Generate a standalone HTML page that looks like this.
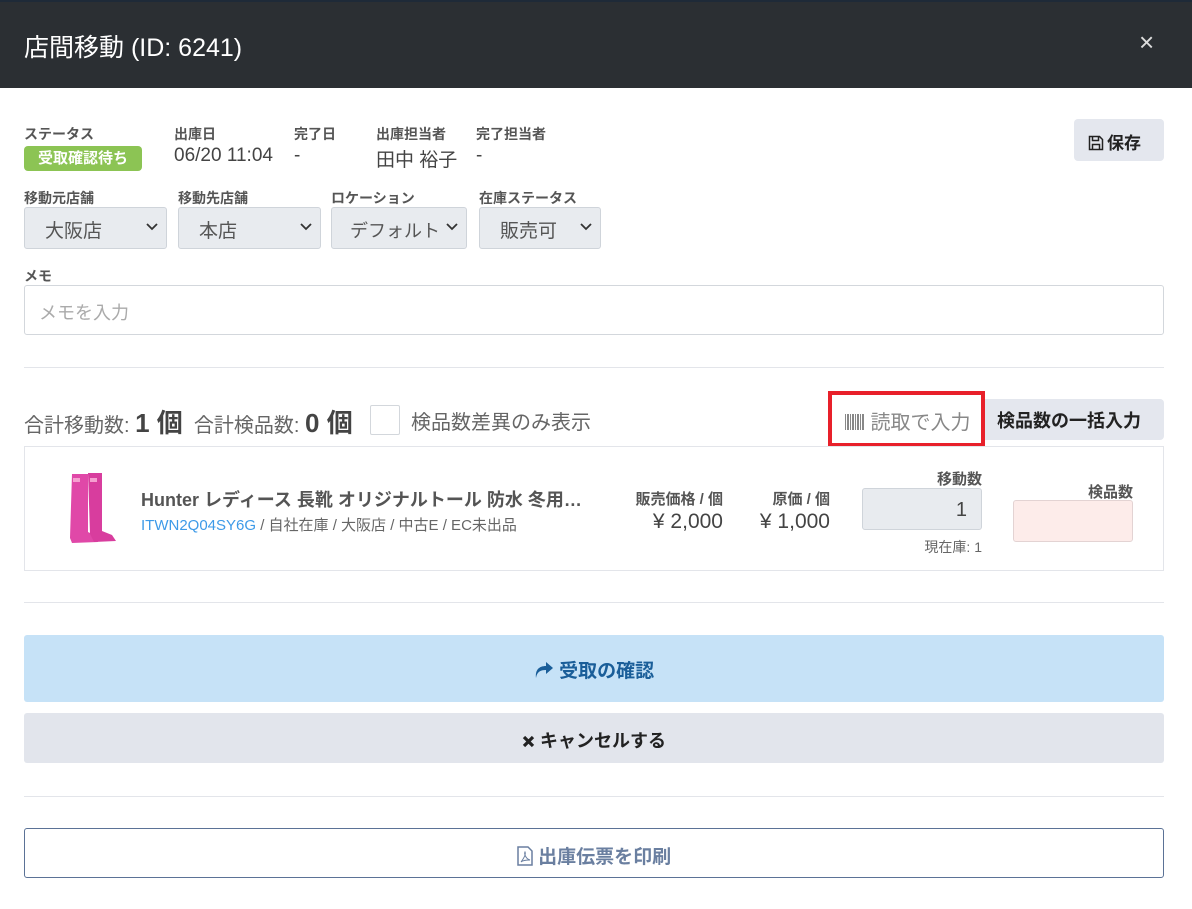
<!DOCTYPE html>
<html><head><meta charset="utf-8"><style>
*{box-sizing:border-box;margin:0;padding:0}
body{width:1192px;height:909px;background:#fff;font-family:"Liberation Sans","Noto Sans CJK JP",sans-serif;color:#444;position:relative;overflow:hidden}
.a{position:absolute}
.hdr{left:0;top:0;width:1192px;height:88px;background:#2b2f33;border-top:2px solid #1e2a38}
.lbl{font-size:14px;font-weight:bold;color:#555;top:124px}
.val{font-size:19px;color:#444;top:145px}
.sel{top:207px;height:42px;background:#e8ebef;border:1px solid #cfd4da;border-radius:3px;font-size:19px;color:#555;padding:8px 0 0 20px}
.sel svg{position:absolute;right:8px;top:15px}
.hr{left:24px;width:1140px;height:1px;background:#e3e5ea}
.btn{left:24px;width:1140px;text-align:center;border-radius:3px;font-weight:bold;font-size:19px}
</style></head><body>
<div class="a hdr"></div>
<div class="a" style="left:24px;top:28px;font-size:25px;color:#fff">店間移動 (ID: 6241)</div>
<div class="a" style="left:1139px;top:27px;font-size:26px;color:#ddd">×</div>

<div class="a lbl" style="left:24px">ステータス</div>
<div class="a" style="left:24px;top:146px;width:118px;height:25px;background:#8cc454;border-radius:4px;color:#fff;font-weight:bold;font-size:15px;text-align:center;line-height:25px">受取確認待ち</div>
<div class="a lbl" style="left:174px">出庫日</div>
<div class="a val" style="left:174px">06/20 11:04</div>
<div class="a lbl" style="left:294px">完了日</div>
<div class="a val" style="left:294px">-</div>
<div class="a lbl" style="left:376px">出庫担当者</div>
<div class="a val" style="left:376px">田中 裕子</div>
<div class="a lbl" style="left:476px">完了担当者</div>
<div class="a val" style="left:476px">-</div>
<div class="a" style="left:1074px;top:119px;width:90px;height:42px;background:#e4e7ee;border-radius:4px;font-size:17px;font-weight:bold;color:#222;padding:10px 0 0 14px">
<svg width="16" height="16" viewBox="0 0 16 16" style="vertical-align:-2px;margin-right:3px"><path d="M1.5 1.5h10l3 3v10h-13z" fill="none" stroke="#222" stroke-width="1.5"/><path d="M4.5 1.5v4h6v-4M4.5 14.5v-5h7v5" fill="none" stroke="#222" stroke-width="1.5"/></svg>保存</div>

<div class="a lbl" style="left:24px;top:188px">移動元店舗</div>
<div class="a lbl" style="left:178px;top:188px">移動先店舗</div>
<div class="a lbl" style="left:331px;top:188px">ロケーション</div>
<div class="a lbl" style="left:479px;top:188px">在庫ステータス</div>
<div class="a sel" style="left:24px;width:143px">大阪店<svg width="12" height="8"><path d="M1 1l5 5 5-5" fill="none" stroke="#333" stroke-width="1.8"/></svg></div>
<div class="a sel" style="left:178px;width:143px">本店<svg width="12" height="8"><path d="M1 1l5 5 5-5" fill="none" stroke="#333" stroke-width="1.8"/></svg></div>
<div class="a sel" style="left:331px;width:136px;padding-left:18px;font-size:18px;padding-top:9px">デフォルト<svg width="12" height="8"><path d="M1 1l5 5 5-5" fill="none" stroke="#333" stroke-width="1.8"/></svg></div>
<div class="a sel" style="left:479px;width:122px">販売可<svg width="12" height="8"><path d="M1 1l5 5 5-5" fill="none" stroke="#333" stroke-width="1.8"/></svg></div>

<div class="a lbl" style="left:24px;top:266px">メモ</div>
<div class="a" style="left:24px;top:285px;width:1140px;height:50px;border:1px solid #d3d7dc;border-radius:3px;font-size:18px;color:#aaa;padding:13px 14px">メモを入力</div>
<div class="a hr" style="top:367px"></div>

<div class="a" style="left:24px;top:403px;font-size:20px;color:#666;white-space:nowrap">合計移動数: <b style="font-size:26px;color:#444">1 個</b>&nbsp; 合計検品数: <b style="font-size:26px;color:#444">0 個</b></div>
<div class="a" style="left:370px;top:405px;width:30px;height:30px;border:1px solid #d3d7dc;border-radius:2px"></div>
<div class="a" style="left:411px;top:406px;font-size:20px;color:#666">検品数差異のみ表示</div>
<div class="a" style="left:828px;top:391px;width:157px;height:56px;border:4px solid #e8202a"></div>
<div class="a" style="left:845px;top:406px;font-size:20px;color:#888"><span style="display:inline-block;width:20px;height:16px;background:repeating-linear-gradient(90deg,#888 0 1px,#fff 1px 2px,#888 2px 4px,#fff 4px 5px);vertical-align:-1px"></span> 読取で入力</div>
<div class="a" style="left:985px;top:399px;width:179px;height:41px;background:#e4e7ee;border-radius:0 4px 4px 0;font-size:18px;font-weight:bold;color:#222;padding:8px 0 0 12px">検品数の一括入力</div>

<div class="a" style="left:24px;top:446px;width:1140px;height:125px;border:1px solid #e3e5ea"></div>
<svg class="a" style="left:64px;top:470px" width="62" height="78" viewBox="0 0 62 78"><path d="M8 4h16v58l8 4 2 6-26 1-2-5z" fill="#e048a8"/><path d="M24 3h14v58l10 4 4 6-22 1-4-8z" fill="#d83d9e"/><rect x="9" y="8" width="7" height="4" fill="#f5a0d0"/><rect x="26" y="8" width="7" height="4" fill="#f5a0d0"/></svg>
<div class="a" style="left:141px;top:486px;font-size:18px;font-weight:bold;color:#555">Hunter レディース 長靴 オリジナルトール 防水 冬用…</div>
<div class="a" style="left:141px;top:514px;font-size:15px;color:#666"><span style="color:#3d9ae8">ITWN2Q04SY6G</span> / 自社在庫 / 大阪店 / 中古E / EC未出品</div>
<div class="a" style="left:600px;top:488px;width:123px;text-align:right;font-size:15px;font-weight:bold;color:#555">販売価格 / 個</div>
<div class="a" style="left:600px;top:510px;width:123px;text-align:right;font-size:21px;color:#444">¥ 2,000</div>
<div class="a" style="left:730px;top:488px;width:100px;text-align:right;font-size:15px;font-weight:bold;color:#555">原価 / 個</div>
<div class="a" style="left:730px;top:510px;width:100px;text-align:right;font-size:21px;color:#444">¥ 1,000</div>
<div class="a" style="left:862px;top:468px;width:120px;text-align:right;font-size:15px;font-weight:bold;color:#555">移動数</div>
<div class="a" style="left:862px;top:488px;width:120px;height:42px;background:#e8ebef;border:1px solid #cfd4da;border-radius:3px;text-align:right;font-size:20px;color:#444;padding:10px 14px 0 0">1</div>
<div class="a" style="left:862px;top:537px;width:120px;text-align:right;font-size:14px;color:#666">現在庫: 1</div>
<div class="a" style="left:1013px;top:481px;width:120px;text-align:right;font-size:15px;font-weight:bold;color:#555">検品数</div>
<div class="a" style="left:1013px;top:500px;width:120px;height:42px;background:#fdecea;border:1px solid #e3d3d3;border-radius:3px"></div>

<div class="a hr" style="top:602px"></div>
<div class="a btn" style="top:635px;height:67px;background:#c6e2f7;color:#1a5e99;padding-top:21px">
<svg width="20" height="18" viewBox="0 0 20 18" style="vertical-align:-2px"><path d="M12 1l7 6-7 6V9C6 9 3 11 2 17 1 9 5 5 12 5z" fill="#1a5e99"/></svg> 受取の確認</div>
<div class="a btn" style="top:713px;height:50px;background:#e2e5ec;color:#222;padding-top:14px;font-size:18px">
<svg width="13" height="13" viewBox="0 0 13 13" style="vertical-align:-1px"><path d="M2 2l9 9M11 2l-9 9" stroke="#222" stroke-width="3.2"/></svg> キャンセルする</div>
<div class="a hr" style="top:796px"></div>
<div class="a btn" style="top:828px;height:50px;border:1px solid #5b7296;color:#6a7fa0;padding-top:13px">
<svg width="16" height="20" viewBox="0 0 16 20" style="vertical-align:-3px"><path d="M1 1h10l4 4v14H1z" fill="none" stroke="#6a7fa0" stroke-width="1.5"/><path d="M4 16c3-4 5-8 4-10-1 2 1 7 5 8-3 0-7 0-9 2" fill="none" stroke="#6a7fa0" stroke-width="1"/></svg> 出庫伝票を印刷</div>
</body></html>
